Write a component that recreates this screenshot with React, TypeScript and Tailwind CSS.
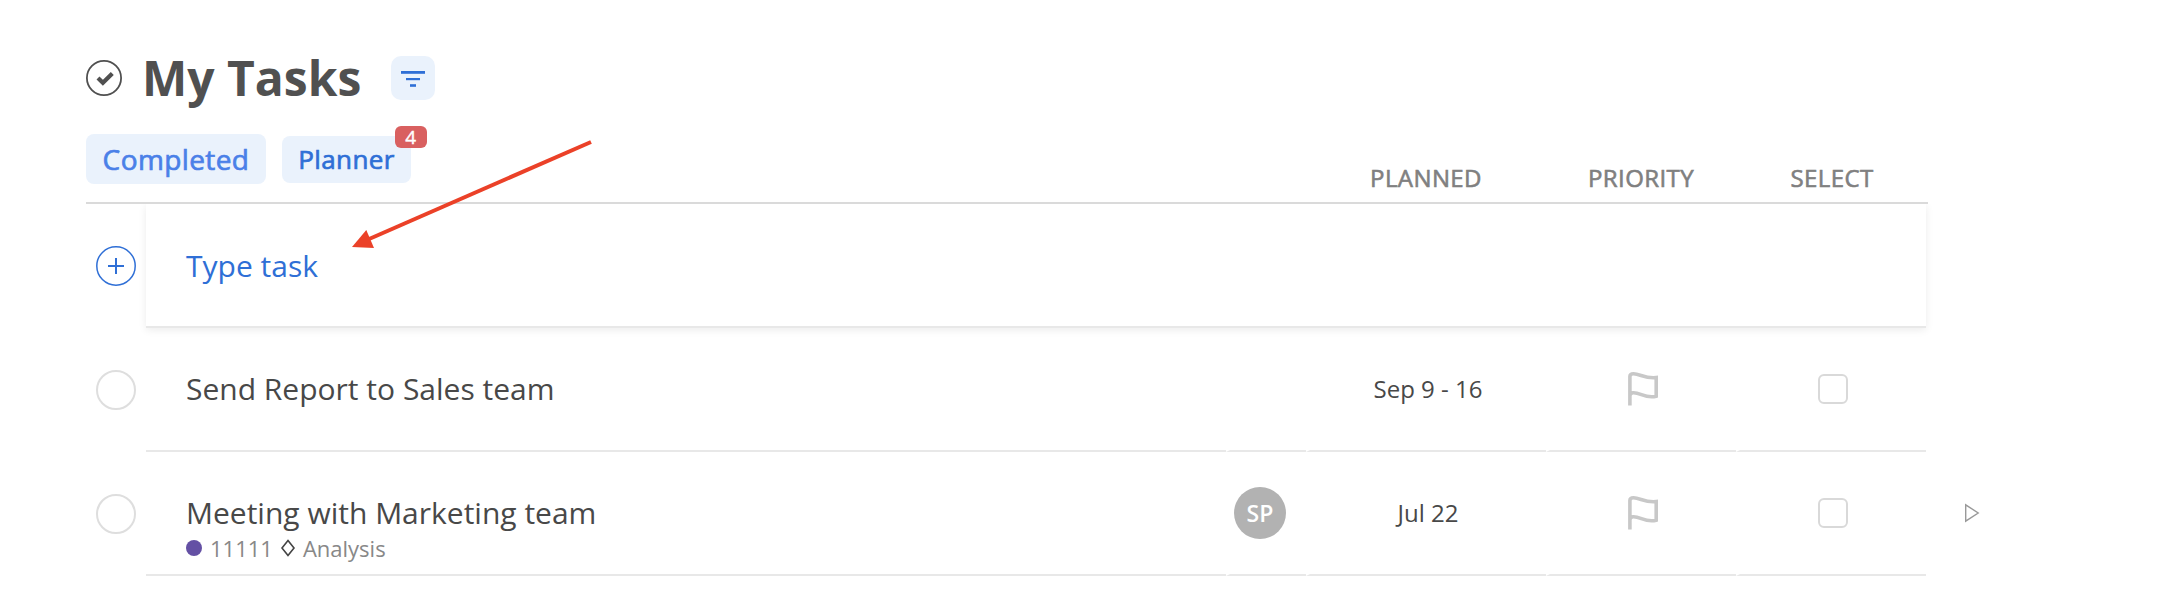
import type { ReactNode } from "react";

interface Task {
  id: number;
  title: string;
  planned: string;
  assignee?: string;
  project?: string;
  section?: string;
  canStart?: boolean;
}

const tasks: Task[] = [
  { id: 1, title: "Send Report to Sales team", planned: "Sep 9 - 16" },
  {
    id: 2,
    title: "Meeting with Marketing team",
    planned: "Jul 22",
    assignee: "SP",
    project: "11111",
    section: "Analysis",
    canStart: true,
  },
];

function CheckCircleIcon() {
  return (
    <svg className="size-9" viewBox="0 0 36 36" fill="none">
      <circle cx="18" cy="18" r="17.1" stroke="#505050" strokeWidth="1.8" />
      <path d="M12 17.9l4.9 4.8 9.4-9.2" stroke="#505050" strokeWidth="4.2" />
    </svg>
  );
}

function FilterIcon() {
  return (
    <svg className="size-11" viewBox="0 0 44 44" fill="#2f6fd6">
      <rect x="10" y="15" width="24" height="2.8" />
      <rect x="15" y="22" width="14" height="2.2" />
      <rect x="19" y="28.2" width="6" height="2.6" />
    </svg>
  );
}

function FlagIcon() {
  return (
    <svg className="h-[34px] w-[30px]" viewBox="0 0 30 34" fill="none" stroke="#c8c8c8" strokeWidth="3.6">
      <path d="M1.9 33.6V4.5C1.9 2.6 3.4 1.8 5.5 1.8C12 1.8 17 6.8 28.2 5.6V24.2C18 27.2 12 20.2 5 20.8C3 21 1.9 22 1.9 24" />
    </svg>
  );
}

function Cell({ className, children }: { className: string; children?: ReactNode }) {
  return (
    <div
      className={`flex items-center justify-center border-b-2 border-l-4 border-b-[#e8e8e8] border-l-transparent ${className}`}
    >
      {children}
    </div>
  );
}

function TaskRow({ task }: { task: Task }) {
  return (
    <li className="flex h-[124px]">
      <div className="flex w-15 shrink-0 items-center pl-2.5">
        <button type="button" aria-label="Complete" className="size-10 rounded-full border-2 border-[#dedede]" />
      </div>
      <div className="w-[1080px] border-b-2 border-[#e8e8e8] pl-10">
        <p className="pt-10 text-[30px] leading-[41px]">{task.title}</p>
        {task.project && (
          <div className="flex items-center text-[22px] leading-[30px] text-[#888]">
            <span className="size-4 rounded-full bg-[#6450a4]" />
            <span className="ml-2">{task.project}</span>
            <svg className="ml-[7px] h-[18px] w-4" viewBox="0 0 16 18" fill="none" stroke="#444" strokeWidth="1.6">
              <path d="M8 1.5L14 9L8 16.5L2 9Z" />
            </svg>
            <span className="ml-[7px]">{task.section}</span>
          </div>
        )}
      </div>
      <Cell className="w-20 pr-4">
        {task.assignee && (
          <span className="flex size-13 shrink-0 items-center justify-center rounded-full bg-[#b2b2b2] text-[23px] font-semibold text-white">
            {task.assignee}
          </span>
        )}
      </Cell>
      <Cell className="w-60 text-2xl">{task.planned}</Cell>
      <Cell className="w-[190px]">
        <FlagIcon />
      </Cell>
      <Cell className="w-[190px]">
        <span className="size-[30px] rounded-md border-2 border-[#d9d9d9]" />
      </Cell>
      {task.canStart && (
        <button type="button" aria-label="Start timer" className="pb-0.5 pl-[38px]">
          <svg className="h-5 w-4" viewBox="0 0 16 20" fill="none" stroke="#999" strokeWidth="1.4">
            <path d="M1.7 1.8V18.2L14.2 10Z" />
          </svg>
        </button>
      )}
    </li>
  );
}

export default function App() {
  return (
    <main className="relative h-[598px] w-full overflow-hidden bg-white pt-14 pl-[86px] font-['Open_Sans',sans-serif] text-[#484848]">
      <header className="flex h-11 items-center">
        <CheckCircleIcon />
        <h1 className="ml-5 text-5xl font-bold text-[#505050]">My Tasks</h1>
        <button type="button" aria-label="Filter" className="ml-[30px] rounded-[10px] bg-[#eaf2fc]">
          <FilterIcon />
        </button>
      </header>

      <div className="mt-[34px] flex h-[70px] w-[1842px] items-start border-b-2 border-[#dadada]">
        <button type="button" className="h-[50px] w-[180px] rounded-lg bg-[#eaf2fc] text-[28px] leading-[50px] tracking-[0.4px] text-[#4a80e8] [-webkit-text-stroke:0.7px]">
          Completed
        </button>
        <button type="button" className="relative mt-0.5 ml-4 h-[47px] w-[129px] rounded-lg bg-[#eaf2fc] text-[26px] leading-[47px] tracking-[0.4px] text-[#2f6fd6] [-webkit-text-stroke:0.7px]">
          Planner
          <span className="absolute -top-2.5 -right-4 h-[22px] w-8 rounded-md bg-[#d96060] text-[19px] leading-[22px] text-white [-webkit-text-stroke:0.4px]">
            4
          </span>
        </button>
        <div className="ml-auto flex h-full items-end pb-2 text-center text-2xl leading-8 tracking-[0.4px] text-[#808080] [-webkit-text-stroke:0.6px]">
          <span className="w-60">PLANNED</span>
          <span className="w-[190px]">PRIORITY</span>
          <span className="w-[192px]">SELECT</span>
        </div>
      </div>

      <div className="flex h-[124px]">
        <div className="flex w-15 shrink-0 items-center pl-2.5">
          <svg className="size-10" viewBox="0 0 40 40" fill="none" stroke="#2f6fd6">
            <circle cx="20" cy="20" r="19.2" strokeWidth="1.5" />
            <path d="M20 12v16M12 20h16" strokeWidth="2" />
          </svg>
        </div>
        <div className="w-[1780px] border-b-2 border-[#e8e8e8] pl-10 text-[30px] leading-[124px] text-[#2f6fd6] shadow-[0_2px_8px_rgba(0,0,0,0.08)] [clip-path:inset(0_-12px_-16px_-12px)]">
          Type task
        </div>
      </div>

      <ul>
        {tasks.map((task) => (
          <TaskRow key={task.id} task={task} />
        ))}
      </ul>

      {/* callout pointing at the new task field */}
      <svg className="absolute top-[130px] left-[340px] h-[130px] w-[260px]" viewBox="340 130 260 130">
        <path d="M591 142L368 239.5" stroke="#eb4128" strokeWidth="4" />
        <path d="M352 247L366.3 230L374 248Z" fill="#eb4128" />
      </svg>
    </main>
  );
}
